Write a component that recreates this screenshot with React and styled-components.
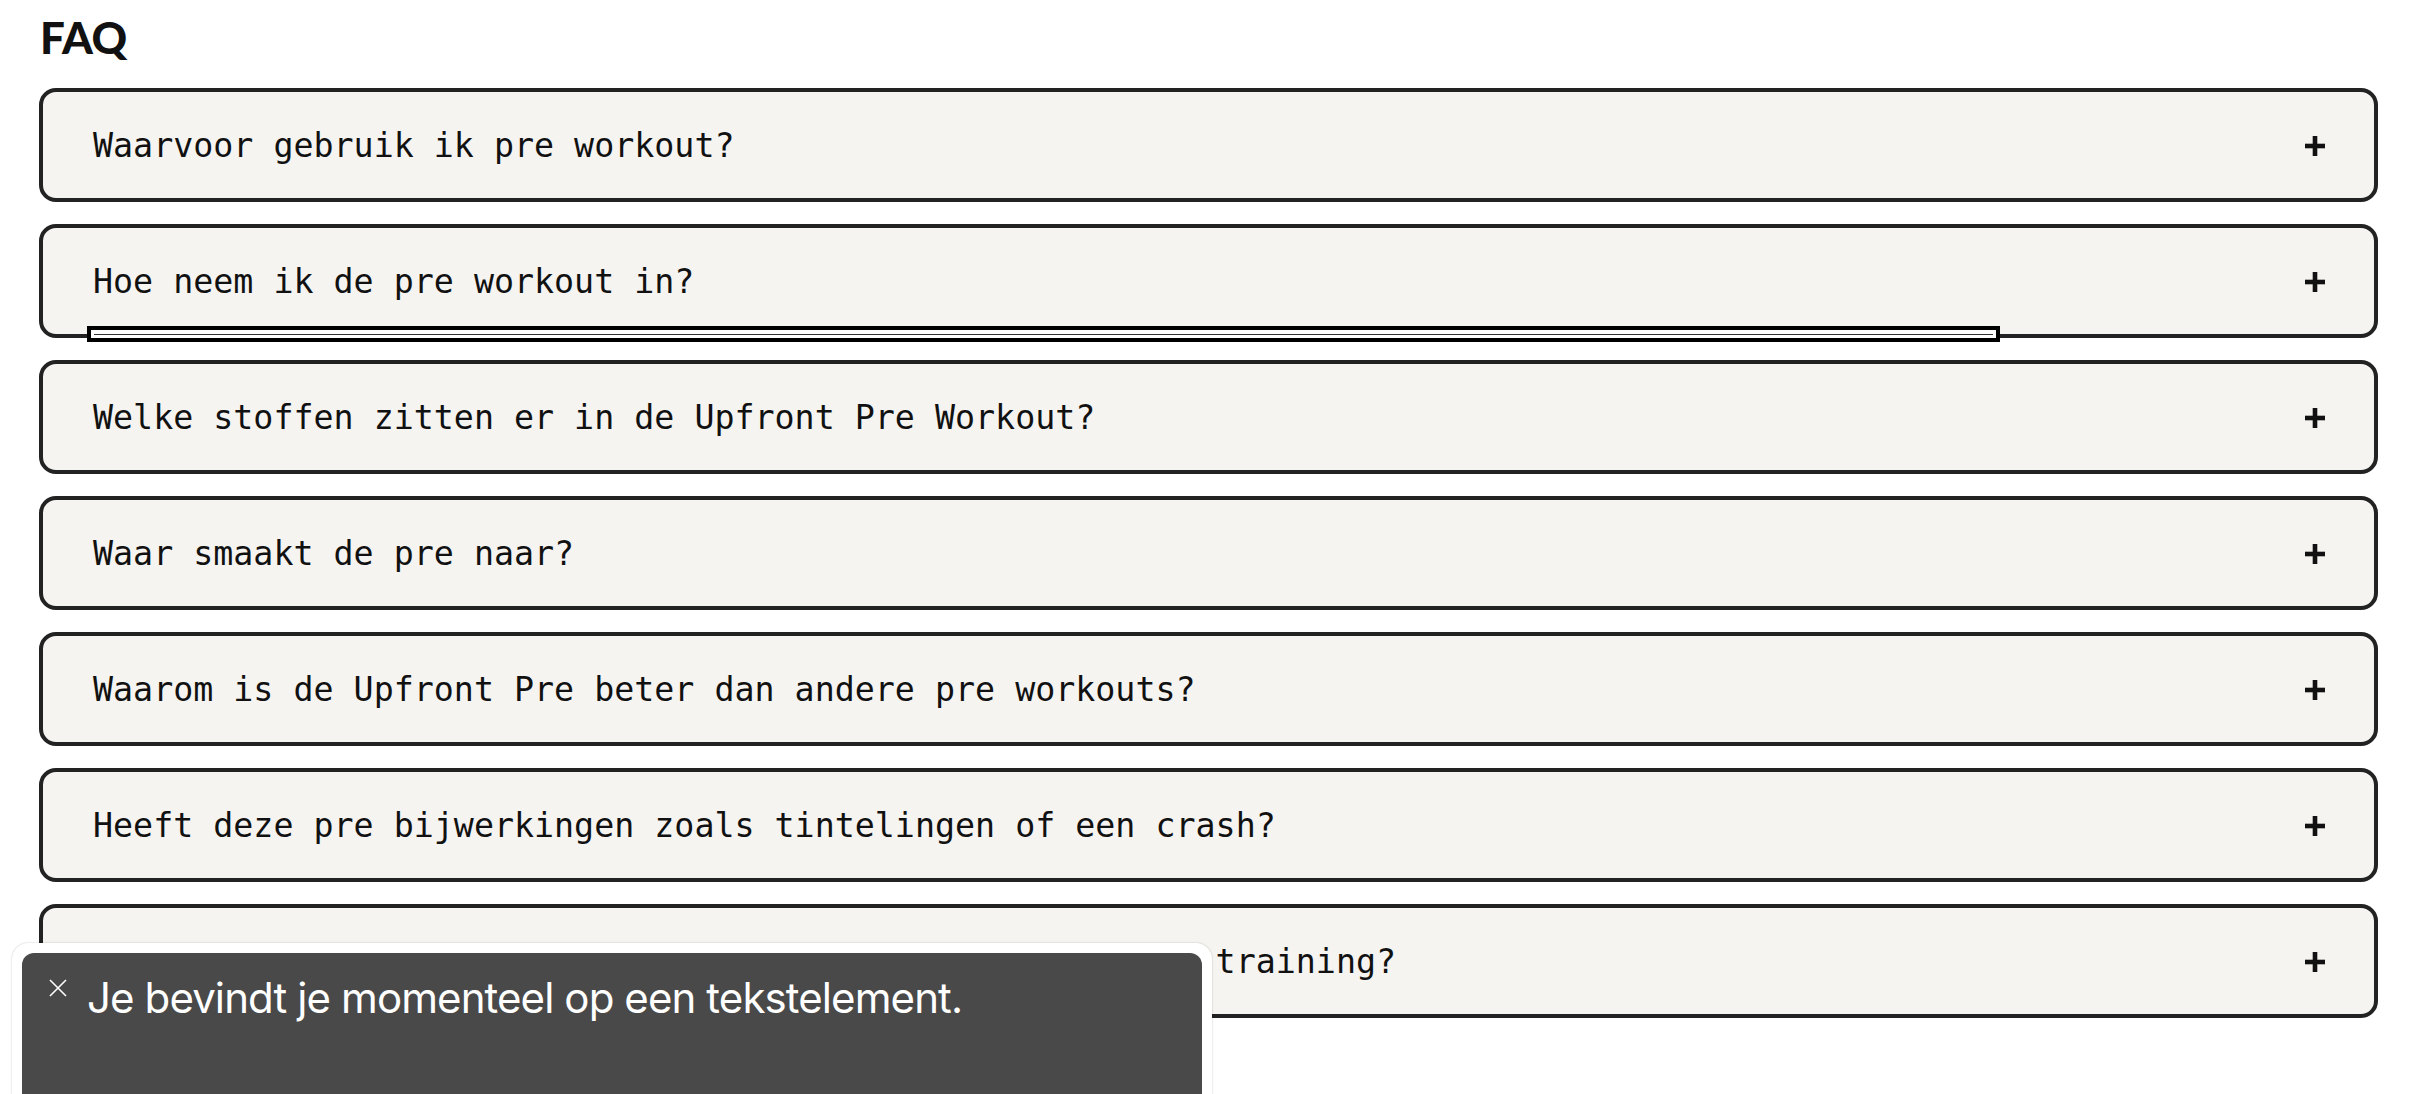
import React from "react"
import styled, { createGlobalStyle } from "styled-components"

const GlobalStyle = createGlobalStyle`
  html, body {
    margin: 0;
    padding: 0;
    background: #fff;
    overflow: hidden;
  }
`

const Page = styled.div`
  padding: 15px 38px 0 39px;
  min-height: 100vh;
  box-sizing: border-box;
  background: #fff;
`

const Title = styled.h2`
  margin: 0 0 29px 1px;
  font-family: "Lato", "DejaVu Sans", sans-serif;
  font-weight: 900;
  font-size: 44px;
  line-height: 1;
  color: #111;
  letter-spacing: -0.3px;
`

const List = styled.div`
  display: flex;
  flex-direction: column;
  gap: 22px;
`

const Item = styled.div`
  position: relative;
  height: 114px;
  box-sizing: border-box;
  border: 4px solid #222;
  border-radius: 17px;
  background: #f5f4f1;
  display: flex;
  align-items: center;
  justify-content: space-between;
  padding: 0 49px 0 50px;
`

const Question = styled.span`
  font-family: "DejaVu Sans Mono", "Liberation Mono", monospace;
  font-size: 33.3px;
  color: #111;
  white-space: nowrap;
`

const Plus = styled.svg`
  margin-top: 2px;
  flex-shrink: 0;
`

const FocusRing = styled.div`
  position: absolute;
  left: 44px;
  right: 374px;
  bottom: -8px;
  height: 16px;
  box-sizing: border-box;
  border: 4px solid #000;
  background: #fff;
  display: flex;
  align-items: center;
  padding: 0 3px;

  &::after {
    content: "";
    flex: 1;
    height: 1px;
    background: #333;
  }
`

const Toast = styled.div`
  position: fixed;
  left: 12px;
  top: 943px;
  width: 1200px;
  height: 200px;
  box-sizing: border-box;
  padding: 10px;
  background: #fff;
  border-radius: 16px;
  box-shadow: 0 0 2px rgba(0, 0, 0, 0.25);
`

const ToastBody = styled.div`
  height: 100%;
  background: #494949;
  border-radius: 12px;
  display: flex;
  align-items: flex-start;
  padding: 20px 0 0 27px;
  gap: 20px;
  box-sizing: border-box;
`

const ToastText = styled.span`
  font-family: "Inter", "Liberation Sans", sans-serif;
  font-size: 42px;
  line-height: 1.2;
  color: #fff;
  letter-spacing: -0.9px;
`

const Close = styled.svg`
  margin-top: 6px;
  flex-shrink: 0;
`

const CloseIcon = () => (
  <Close width="18" height="18" viewBox="0 0 18 18">
    <path d="M1 1 L17 17 M17 1 L1 17" stroke="#fff" strokeWidth="1.6" />
  </Close>
)

const PlusIcon = () => (
  <Plus width="20" height="20" viewBox="0 0 20 20">
    <rect x="0" y="7.7" width="20" height="4.6" fill="#111" />
    <rect x="7.7" y="0" width="4.6" height="20" fill="#111" />
  </Plus>
)

const questions = [
  "Waarvoor gebruik ik pre workout?",
  "Hoe neem ik de pre workout in?",
  "Welke stoffen zitten er in de Upfront Pre Workout?",
  "Waar smaakt de pre naar?",
  "Waarom is de Upfront Pre beter dan andere pre workouts?",
  "Heeft deze pre bijwerkingen zoals tintelingen of een crash?",
  "Hoe lang van tevoren neem ik de pre workout in voor een training?",
]

export default function App() {
  return (
    <Page>
      <GlobalStyle />
      <Title>FAQ</Title>
      <List>
        {questions.map((q, i) => (
          <Item key={q}>
            <Question>{q}</Question>
            <PlusIcon />
            {i === 1 && <FocusRing />}
          </Item>
        ))}
      </List>
      <Toast>
        <ToastBody>
          <CloseIcon />
          <ToastText>Je bevindt je momenteel op een tekstelement.</ToastText>
        </ToastBody>
      </Toast>
    </Page>
  )
}
